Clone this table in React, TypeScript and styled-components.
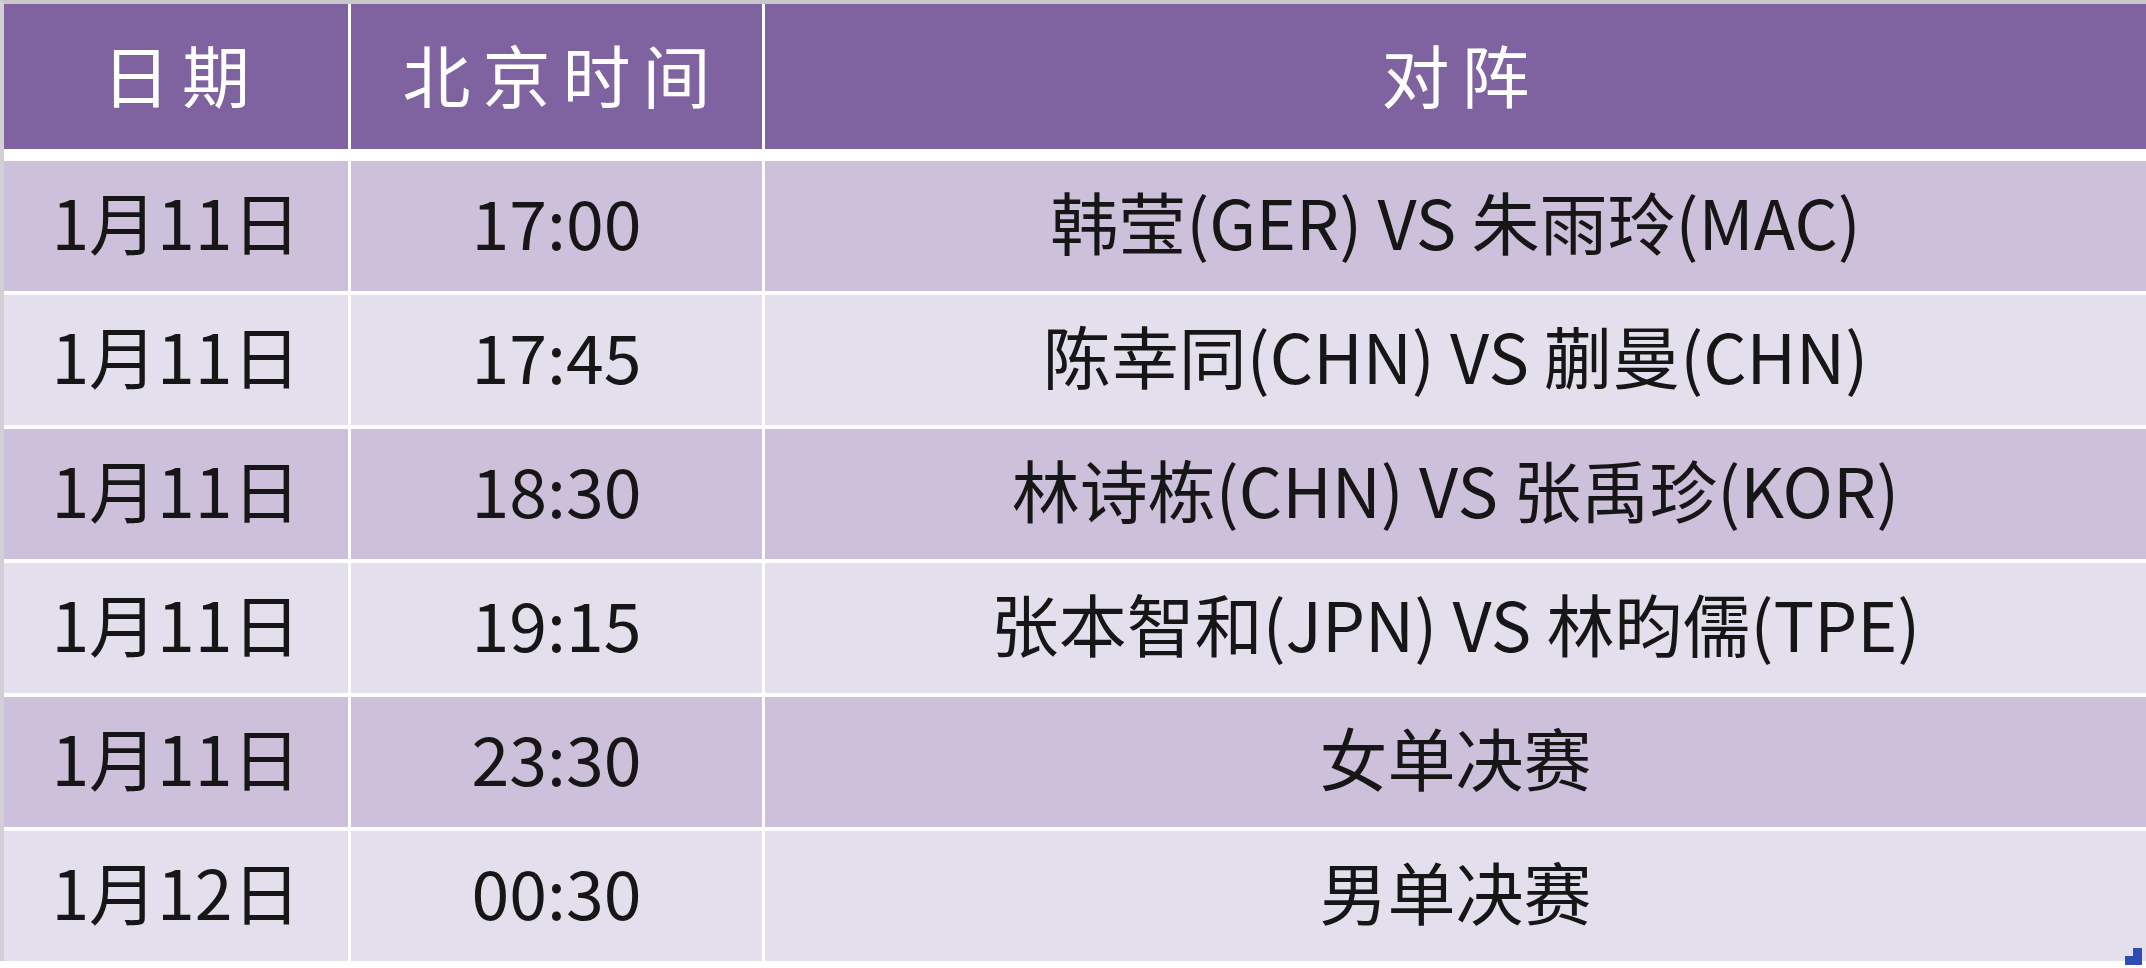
import React from 'react'
import styled, { createGlobalStyle } from 'styled-components'

const GlobalStyle = createGlobalStyle`
  html, body {
    margin: 0;
    padding: 0;
    background: #ffffff;
  }
  body {
    font-family: "Noto Sans CJK SC", "Noto Sans", sans-serif;
  }
`

const Page = styled.div`
  position: relative;
  width: 2146px;
  height: 968px;
  overflow: hidden;
  background: #ffffff;
`

const Sheet = styled.div`
  display: flex;
  flex-direction: column;
  gap: 4px;
  border-top: 4px solid #c8c8cc;
  border-left: 4px solid #d2d0d6;
`

const Row = styled.div<{ $head?: boolean }>`
  display: grid;
  grid-template-columns: 344px 411px 1fr;
  column-gap: 3px;
  margin-bottom: ${(p) => (p.$head ? '8px' : '0')};
`

const Cell = styled.div<{ $tone: 'head' | 'dark' | 'light' }>`
  display: flex;
  align-items: center;
  justify-content: center;
  box-sizing: border-box;
  height: ${(p) => (p.$tone === 'head' ? '145px' : '130px')};
  background: ${(p) =>
    p.$tone === 'head' ? '#7f62a0' : p.$tone === 'dark' ? '#ccc0da' : '#e4dfec'};
  color: ${(p) => (p.$tone === 'head' ? '#ffffff' : '#161616')};
  font-size: 68px;
  letter-spacing: ${(p) => (p.$tone === 'head' ? '12px' : '0')};
  padding-left: ${(p) => (p.$tone === 'head' ? '12px' : '0')};
  padding-bottom: ${(p) => (p.$tone === 'head' ? '5px' : '10px')};
  white-space: nowrap;
  line-height: 1;
`

const Handle = styled.svg`
  position: absolute;
  right: 4px;
  bottom: 3px;
  width: 17px;
  height: 17px;
`

const HEADERS = ['日期', '北京时间', '对阵']

const MATCHES = [
  { date: '1月11日', time: '17:00', vs: '韩莹(GER) VS 朱雨玲(MAC)' },
  { date: '1月11日', time: '17:45', vs: '陈幸同(CHN) VS 蒯曼(CHN)' },
  { date: '1月11日', time: '18:30', vs: '林诗栋(CHN) VS 张禹珍(KOR)' },
  { date: '1月11日', time: '19:15', vs: '张本智和(JPN) VS 林昀儒(TPE)' },
  { date: '1月11日', time: '23:30', vs: '女单决赛' },
  { date: '1月12日', time: '00:30', vs: '男单决赛' },
]

export default function App() {
  return (
    <Page>
      <GlobalStyle />
      <Sheet>
        <Row $head>
          {HEADERS.map((h) => (
            <Cell key={h} $tone="head">
              {h}
            </Cell>
          ))}
        </Row>
        {MATCHES.map((m, i) => {
          const tone = i % 2 === 0 ? 'dark' : 'light'
          return (
            <Row key={i}>
              <Cell $tone={tone}>{m.date}</Cell>
              <Cell $tone={tone}>{m.time}</Cell>
              <Cell $tone={tone}>{m.vs}</Cell>
            </Row>
          )
        })}
      </Sheet>
      <Handle viewBox="0 0 17 17">
        <polygon points="8,0 17,0 17,17 0,17 0,8 8,8" fill="#2f4db3" />
      </Handle>
    </Page>
  )
}
